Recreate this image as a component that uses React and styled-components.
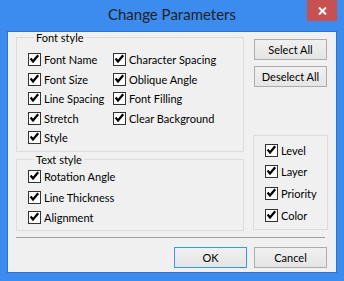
import React from "react";
import styled, { createGlobalStyle } from "styled-components";

const Global = createGlobalStyle`
  html, body { margin: 0; padding: 0; background: #ffffff; }
  body { font-family: Lato, "Liberation Sans", sans-serif; }
  * { box-sizing: border-box; }
`;

const FONT = `Lato, "Liberation Sans", sans-serif`;
const UI_SIZE = "11px";

const Window = styled.div`
  width: 344px;
  height: 281px;
  background: #3c8cf0;
  display: flex;
  flex-direction: column;
  padding: 0 7px 8px;
  font-family: ${FONT};
`;

const TitleBar = styled.div`
  height: 31px;
  flex: none;
  display: grid;
  grid-template-columns: 1fr auto 1fr;
  align-items: start;
`;

const Title = styled.div`
  grid-column: 2;
  font-size: 15px;
  line-height: 29px;
  color: #222;
  white-space: nowrap;
`;

const CloseButton = styled.div`
  grid-column: 3;
  justify-self: end;
  width: 30px;
  height: 21px;
  background: #c75050;
  display: flex;
  align-items: center;
  justify-content: center;
  padding-top: 1px;
`;

const Client = styled.div`
  flex: 1;
  background: #f0f0f0;
  border: 1px solid #2f72cc;
  display: flex;
  flex-direction: column;
  padding: 0 8px 4px 8px;
`;

const TopRow = styled.div`
  display: flex;
  gap: 9px;
`;

const LeftCol = styled.div`
  width: 228px;
  display: flex;
  flex-direction: column;
  gap: 2px;
`;

const GroupBox = styled.fieldset`
  margin: 0;
  min-width: 0;
  border: 1px solid #dcdcdc;
  padding: ${(p) => p.$pad};
`;

const Legend = styled.legend`
  margin-left: 6px;
  padding: 0 2px;
  font-size: ${UI_SIZE};
  line-height: 11px;
  color: #000;
`;

const CheckGrid = styled.div`
  display: grid;
  grid-auto-flow: column;
  grid-template-columns: ${(p) => p.$cols};
  grid-template-rows: ${(p) => p.$rows};
`;

const Item = styled.label`
  display: flex;
  align-items: center;
  gap: 3px;
  font-size: ${UI_SIZE};
  color: #000;
  white-space: nowrap;
`;

const Box = styled.span`
  flex: none;
  width: 13px;
  height: 13px;
  border: 1px solid #333333;
  background: #ffffff;
  display: block;
  svg { display: block; }
`;

const RightCol = styled.div`
  width: 75px;
  display: flex;
  flex-direction: column;
  align-items: center;
`;

const PushButton = styled.div`
  width: 73px;
  height: 21px;
  flex: none;
  margin-top: ${(p) => p.$mt || 0}px;
  border: 1px solid ${(p) => (p.$default ? "#3399ff" : "#acacac")};
  background: linear-gradient(#f0f0f0, #e5e5e5);
  display: flex;
  align-items: center;
  justify-content: center;
  font-size: ${UI_SIZE};
  color: #000;
  white-space: nowrap;
`;

const SideGroup = styled.div`
  align-self: stretch;
  margin-top: auto;
  margin-bottom: 1px;
  border: 1px solid #dcdcdc;
  padding: 4px 0 3px 11px;
`;

const Separator = styled.div`
  height: 1px;
  background: #a0a0a0;
  margin: 6px 3px 0 0;
`;

const ButtonRow = styled.div`
  display: flex;
  justify-content: flex-end;
  gap: 7px;
  margin: 9px 1px 0 0;
`;

const Check = ({ label }) => (
  <Item>
    <Box>
      <svg width="11" height="11" viewBox="0 0 11 11">
        <polyline
          points="1.6,4.6 4,7.4 9.2,1.2"
          fill="none"
          stroke="#000"
          strokeWidth="2.3"
          strokeLinejoin="miter"
        />
      </svg>
    </Box>
    <span>{label}</span>
  </Item>
);

const fontStyle = [
  "Font Name",
  "Font Size",
  "Line Spacing",
  "Stretch",
  "Style",
  "Character Spacing",
  "Oblique Angle",
  "Font Filling",
  "Clear Background",
];
const textStyle = ["Rotation Angle", "Line Thickness", "Alignment"];
const side = ["Level", "Layer", "Priority", "Color"];

export default function App() {
  return (
    <>
      <Global />
      <Window>
        <TitleBar>
          <Title>Change Parameters</Title>
          <CloseButton>
            <svg width="9" height="8" viewBox="0 0 9 8">
              <path d="M1 0.5 L8 7.5 M8 0.5 L1 7.5" stroke="#fff" strokeWidth="2" />
            </svg>
          </CloseButton>
        </TitleBar>
        <Client>
          <TopRow>
            <LeftCol>
              <GroupBox $pad="7px 0 4px 11px">
                <Legend>Font style</Legend>
                <CheckGrid $cols="85px auto" $rows="19px 20px 19px 20px 19px">
                  {fontStyle.map((l) => (
                    <Check key={l} label={l} />
                  ))}
                </CheckGrid>
              </GroupBox>
              <GroupBox $pad="1px 0 3px 11px">
                <Legend>Text style</Legend>
                <CheckGrid $cols="auto" $rows="21px 20px 20px">
                  {textStyle.map((l) => (
                    <Check key={l} label={l} />
                  ))}
                </CheckGrid>
              </GroupBox>
            </LeftCol>
            <RightCol>
              <PushButton $mt={7}>Select All</PushButton>
              <PushButton $mt={6}>Deselect All</PushButton>
              <SideGroup>
                <CheckGrid $cols="auto" $rows="21px 21px 22px 22px">
                  {side.map((l) => (
                    <Check key={l} label={l} />
                  ))}
                </CheckGrid>
              </SideGroup>
            </RightCol>
          </TopRow>
          <Separator />
          <ButtonRow>
            <PushButton $default>OK</PushButton>
            <PushButton>Cancel</PushButton>
          </ButtonRow>
        </Client>
      </Window>
    </>
  );
}
